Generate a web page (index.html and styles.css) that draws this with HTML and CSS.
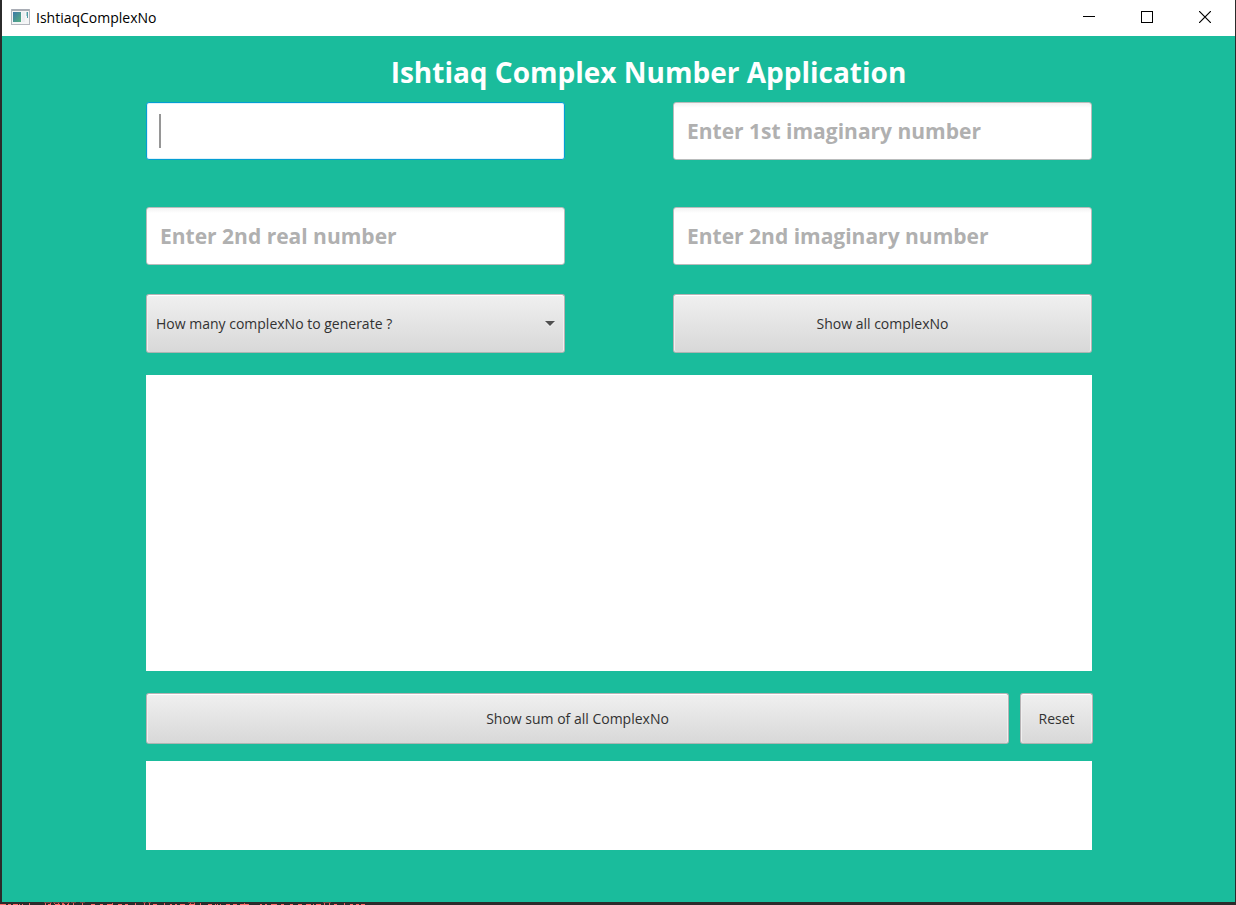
FILE: index.html
```html
<!DOCTYPE html>
<html lang="en">
<head>
<meta charset="utf-8">
<title>IshtiaqComplexNo</title>
<link rel="stylesheet" href="styles.css">
</head>
<body>
<div class="desktop">
  <div class="window">
    <header class="titlebar">
      <svg class="app-icon" width="19" height="16" viewBox="0 0 19 16" aria-hidden="true">
        <defs><linearGradient id="pane" x1="0" y1="0" x2="1" y2="1"><stop offset="0" stop-color="#3c78a8"/><stop offset="1" stop-color="#55b080"/></linearGradient></defs>
        <rect x="0.5" y="0.5" width="18" height="15" fill="#f4f5f6" stroke="#b4b7be"/>
        <rect x="1" y="0" width="17" height="2" fill="#a9adb5"/>
        <rect x="2" y="3" width="8" height="10" fill="url(#pane)"/>
        <rect x="11" y="3" width="3" height="10" fill="#eceef1"/>
        <rect x="16" y="3" width="1" height="6" fill="#4f9ba5"/>
        <rect x="15" y="3" width="1" height="4" fill="#a9cdd2"/>
      </svg>
      <span class="app-name">IshtiaqComplexNo</span>
      <button class="win-btn" type="button" aria-label="Minimize"><svg width="12" height="12" viewBox="0 0 12 12"><path d="M0 5.5H12" stroke="#000"/></svg></button>
      <button class="win-btn" type="button" aria-label="Maximize"><svg width="12" height="12" viewBox="0 0 12 12"><rect x="0.5" y="0.5" width="11" height="11" fill="none" stroke="#000"/></svg></button>
      <button class="win-btn" type="button" aria-label="Close"><svg width="12" height="12" viewBox="0 0 12 12"><path d="M0 0L12 12M12 0L0 12" stroke="#000" stroke-width="1.2"/></svg></button>
    </header>
    <main class="content">
      <h1 class="heading">Ishtiaq Complex Number Application</h1>
      <div class="row">
        <input class="field field-active" type="text" aria-label="Enter 1st real number">
        <input class="field" type="text" aria-label="Enter 1st imaginary number" placeholder="Enter 1st imaginary number">
      </div>
      <div class="row row-second">
        <input class="field" type="text" aria-label="Enter 2nd real number" placeholder="Enter 2nd real number">
        <input class="field" type="text" aria-label="Enter 2nd imaginary number" placeholder="Enter 2nd imaginary number">
      </div>
      <div class="row row-actions">
        <div class="combo">
          <select class="control combo-select" aria-label="How many complexNo to generate ?">
            <option>How many complexNo to generate ?</option>
          </select>
          <svg class="combo-arrow" width="10" height="6" viewBox="0 0 10 6" aria-hidden="true"><path d="M0 1H10L5 6Z" fill="#f4f4f4"/><path d="M0 0H10L5 5Z" fill="#505050"/></svg>
        </div>
        <button class="control" type="button">Show all complexNo</button>
      </div>
      <textarea class="output output-list" aria-label="Complex numbers" readonly></textarea>
      <div class="sum-row">
        <button class="control" type="button">Show sum of all ComplexNo</button>
        <button class="control" type="button">Reset</button>
      </div>
      <textarea class="output output-sum" aria-label="Sum" readonly></textarea>
    </main>
  </div>
  <svg class="console-edge" width="370" height="3" viewBox="0 0 370 3" aria-hidden="true">
    <path d="M0 2.5H6M8 2.5H11M13 2.5H18M19 2.5H20M22 2.5H23M29 2.5H30M45 2.5H46M48 2.5H51M55 2.5H60M62 2.5H65M67 2.5H69M73 2.5H74M82 2.5H83M91 2.5H95M100 2.5H103M107 2.5H113M118 2.5H122M125 2.5H128M135 2.5H136M144 2.5H145M149 2.5H150M153 2.5H157M164 2.5H165M170 2.5H172M175 2.5H177M180 2.5H185M189 2.5H195M200 2.5H201M208 2.5H212M215 2.5H216M217 2.5H218M220 2.5H221M226 2.5H230M233 2.5H237M240 2.5H249M260 2.5H262M265 2.5H267M271 2.5H277M281 2.5H284M290 2.5H293M298 2.5H302M306 2.5H311M313 2.5H314M316 2.5H321M324 2.5H325M329 2.5H330M334 2.5H337M344 2.5H345M350 2.5H353M356 2.5H359M361 2.5H365" stroke="#ff6b68"/>
    <path d="M29 1.5H30M45 1.5H46M50 1.5H51M54 1.5H55M58 1.5H59M62 1.5H64M68 1.5H69M73 1.5H74M82 1.5H83M112 1.5H113M135 1.5H136M144 1.5H145M149 1.5H150M164 1.5H165M190 1.5H191M194 1.5H195M200 1.5H201M244 1.5H245M324 1.5H325M329 1.5H330M344 1.5H345" stroke="#d95f5c"/>
    <path d="M44 0.5H52M53 0.5H60M61 0.5H70M71 0.5H76M80 0.5H85M143 0.5H146M148 0.5H151M188 0.5H195M323 0.5H331" stroke="#6e3f3e"/>
  </svg>
</div>
</body>
</html>
```
FILE: styles.css
```css
* { box-sizing: border-box; }

body {
  margin: 0;
  background: #2b2b2b;
  font-family: "Open Sans", "Noto Sans", sans-serif;
  color: #323232;
}

.desktop {
  min-height: 100vh;
  display: flex;
  flex-direction: column;
}

.window {
  flex: 1;
  margin: 0 1px 0 2px;
  background: #1abc9c;
}

.console-edge { display: block; }

.titlebar {
  display: flex;
  align-items: center;
  height: 36px;
  padding: 0 1px 0 9px;
  background: #fff;
}

.app-icon { display: block; margin-bottom: 2px; }

.app-name {
  flex: 1;
  padding-left: 6px;
  font-size: 14px;
  line-height: 20px;
  color: #000;
}

.win-btn {
  width: 58px;
  height: 34px;
  margin-bottom: 2px;
  padding: 0;
  border: 0;
  background: none;
  display: flex;
  align-items: center;
  justify-content: center;
}

.content {
  display: flex;
  flex-direction: column;
  padding: 16px 143px 52px 144px;
}

.heading {
  margin: 0 0 10px;
  padding-left: 59px;
  font-size: 28px;
  line-height: 40px;
  font-weight: 700;
  text-align: center;
  color: #fff;
}

.row {
  display: grid;
  grid-template-columns: 1fr 1fr;
  column-gap: 108px;
}

.row-second { margin-top: 47px; }
.row-actions { margin-top: 29px; }

.field {
  width: 100%;
  height: 58px;
  padding: 0 13px;
  border: 1px solid #b9bcbc;
  border-radius: 3px;
  background: linear-gradient(#f2f2f2, #fff 5px);
  font: 700 21px/32px "Open Sans", "Noto Sans", sans-serif;
  color: #323232;
}

.field::placeholder { color: #b0b0b0; opacity: 1; }

.field-active {
  border-color: #039ed3;
  box-shadow: inset 0 0 0 1px #dff2f8;
  background: linear-gradient(#969696, #969696) 12px 11px / 2px 34px no-repeat #fff;
}

.control {
  width: 100%;
  height: 59px;
  padding: 0 9px;
  border: 1px solid #b7b3b5;
  border-bottom-color: #adb5b3;
  border-radius: 3px;
  background: linear-gradient(#f0f0f0, #d8d8d8);
  box-shadow: inset 0 1px 0 #fff, inset 1px 0 0 #f0f0f0, inset -1px 0 0 #f0f0f0;
  font: 400 14px/20px "Open Sans", "Noto Sans", sans-serif;
  color: #323232;
  text-align: center;
}

.combo { position: relative; }

.combo-select {
  appearance: none;
  text-align: left;
}

.combo-arrow {
  position: absolute;
  right: 10px;
  top: 27px;
  pointer-events: none;
}

.output {
  display: block;
  width: 100%;
  margin: 0;
  padding: 8px;
  border: 0;
  background: #fff;
  resize: none;
}

.output-list { height: 296px; margin-top: 22px; }
.output-sum { height: 89px; }

.sum-row {
  display: grid;
  grid-template-columns: 1fr 73px;
  column-gap: 11px;
  margin: 22px -1px 17px 0;
}

.sum-row .control { height: 51px; }
```
